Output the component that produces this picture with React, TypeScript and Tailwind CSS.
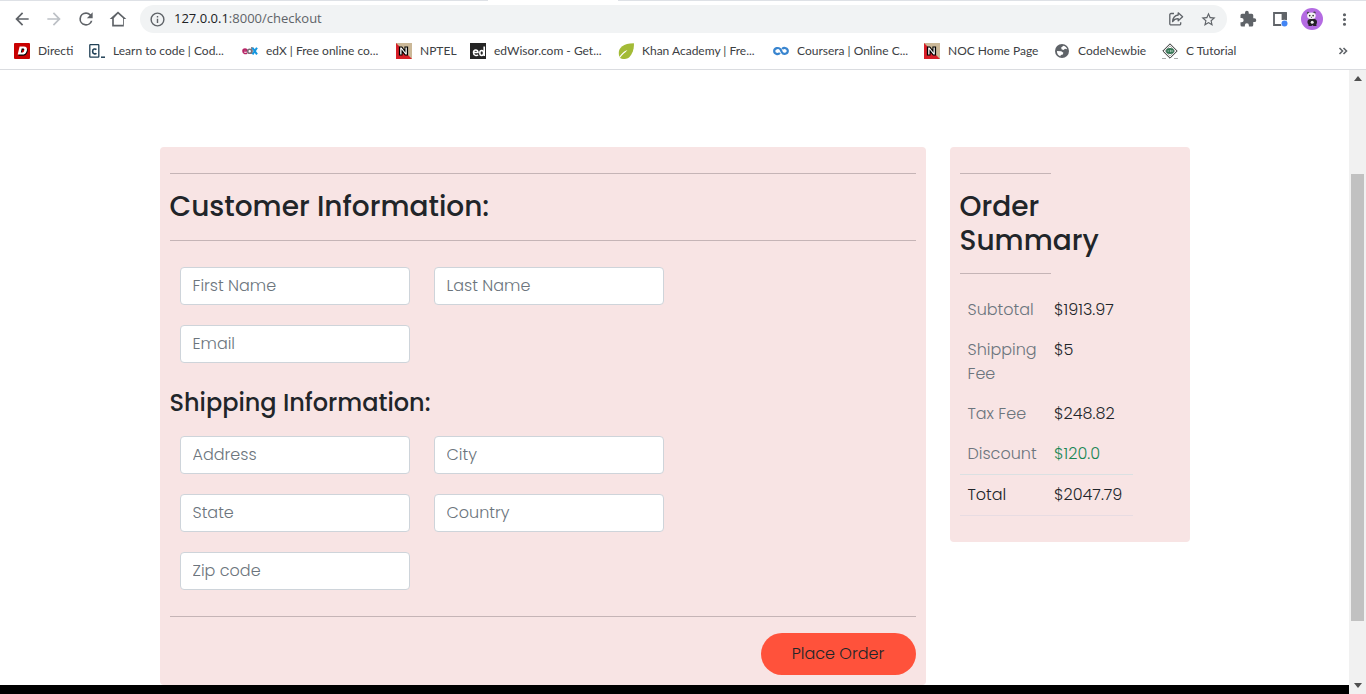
import React from "react";

function FieldInput({ label, type = "text" }: { label: string; type?: string }) {
  return (
    <input
      type={type}
      aria-label={label}
      placeholder={label}
      className="h-[38px] w-full rounded border border-[#ced4da] bg-white px-3 pb-px text-base font-light text-[#212529] placeholder:text-[#6c757d] placeholder:opacity-100"
    />
  );
}

function Rule({ className = "" }: { className?: string }) {
  return <hr className={`my-4 border-0 border-t border-[#c5b4b6] ${className}`} />;
}

const DirectiIcon = () => (
  <svg width="16" height="16" viewBox="0 0 16 16">
    <rect width="16" height="16" rx="1" fill="#c90000" />
    <path d="M5.6 4h4.2c2.5 0 3.7 1.5 3.1 4-.6 2.800-2.300 4.200-5 4.200H3.700zM7.700 6.200 6.800 10h1.100c1.300 0 2-.6 2.300-2 .3-1.200-.1-1.800-1.400-1.800z" fill="#000" transform="translate(.7 .6)" />
    <path d="M5.600 3.400h4.200c2.500 0 3.700 1.500 3.100 4-.6 2.800-2.300 4.200-5 4.200H3.700zM7.700 5.600 6.800 9.400h1.100c1.300 0 2-.6 2.300-2 .3-1.200-.1-1.800-1.400-1.800z" fill="#fff" />
  </svg>
);

const CodecademyIcon = () => (
  <svg width="16" height="16" viewBox="0 0 16 16" fill="none" stroke="#204056">
    <rect x=".8" y="1.700" width="9" height="12.500" rx=".6" strokeWidth="1.300" />
    <path d="M7.400 6.600C6.400 5.500 3.600 5.800 3.600 8.400s2.800 3 3.800 1.800" strokeWidth="1.600" />
    <path d="M12 14.200h4" strokeWidth="1.500" />
  </svg>
);

const EdxIcon = () => (
  <svg width="16" height="16" viewBox="0 0 16 16" fill="none">
    <path d="M1 8h4c0-2.500-4-2.500-4 0 0 3 3 3 4 1.700" stroke="#b72667" strokeWidth="1.600" />
    <circle cx="7.700" cy="8.300" r="2" stroke="#7b6f78" strokeWidth="1.600" />
    <path d="M9.900 4v7" stroke="#7b6f78" strokeWidth="1.500" />
    <path d="m10.500 4.700 4.500 6.700M15 4.700l-4.500 6.700" stroke="#1296e0" strokeWidth="2" />
  </svg>
);

const NptelIcon = () => (
  <svg width="16" height="16" viewBox="0 0 16 16">
    <rect width="16" height="16" fill="#cbb898" />
    <path d="M0 0v16h16z" fill="#d71e27" />
    <path d="M3.500 12V4h2.300l3.200 4.300V4h2.500v8H9.200L6 7.800V12z" stroke="#000" strokeWidth="1.200" fill="#000" />
    <path d="M4.200 11.500v-7h1.300l4 5.300V4.500h1.300v7H9.500l-4-5.200v5.200z" fill="#fff" />
  </svg>
);

const EdwisorIcon = () => (
  <svg width="16" height="16" viewBox="0 0 16 16" fill="none" stroke="#fff">
    <rect width="16" height="16" fill="#252525" stroke="none" />
    <path d="M4 9.500h4c0-3.500-4.500-3-4.500 0 0 3.500 3.500 3.500 4.500 2.200" strokeWidth="1.500" />
    <ellipse cx="11.700" cy="10" rx="1.900" ry="2.500" strokeWidth="1.500" />
    <path d="M14.200 3.500v9.600" strokeWidth="1.600" />
  </svg>
);

const KhanIcon = () => (
  <svg width="16" height="16" viewBox="0 0 16 16">
    <path d="M1.500 14C-1 7 2.500.4 15.900.2c.4 5-1.100 10.500-4.600 14-3 2.300-6.400 2.200-8.800 1.100z" fill="#a3bb36" />
    <path d="M.8 14.300C3 12.200 4.600 8.800 9.400 7 7.400 9.800 4.300 11.200 2 14.700z" fill="#fff" />
  </svg>
);

const CourseraIcon = () => (
  <svg width="16" height="16" viewBox="0 0 16 16" fill="none">
    <path d="M6.900 9.800C5.200 12.100 1.200 11 1.200 8S5.900 4 7.500 6.300l1.400 3c1.500 2.900 5.900 1.500 5.900-1.300s-3.700-4-5.600-2" stroke="#3985cf" strokeWidth="2.200" />
  </svg>
);

const GlobeIcon = () => (
  <svg width="16" height="16" viewBox="0 0 16 16">
    <circle cx="8" cy="8" r="7" fill="#5f6368" />
    <path d="M9.500 2.800 7.200 4.600l.3 1.700 2 .7 1.500-1.200 2.200.4c-.5-1.700-1.900-3-3.700-3.400zM2.900 7.900l4.300.4 2.200 1.500-.6 1.700-2 .6-.4 1.100C4.300 12.600 2.800 10.500 2.900 7.900z" fill="#fff" />
  </svg>
);

const TutorialIcon = () => (
  <svg width="16" height="16" viewBox="0 0 16 16" fill="none">
    <path d="m8 .8 7.200 7.200L8 15.200.8 8z" stroke="#333" strokeWidth="1" fill="#fff" />
    <path d="m8 2.800 5.200 5.200L8 13.200 2.800 8z" stroke="#777" strokeWidth=".7" />
    <ellipse cx="8" cy="8" rx="4" ry="3" fill="#317451" />
    <path d="M5.500 8h1.800m1.300-1.200v2.400m1.500-2.200v2" stroke="#c6ddd0" strokeWidth=".8" />
    <path d="M0 15.500h4m8 0h4" stroke="#aaa" />
  </svg>
);

const bookmarks: { name: string; Icon: React.FC }[] = [
  { name: "Directi", Icon: DirectiIcon },
  { name: "Learn to code | Cod...", Icon: CodecademyIcon },
  { name: "edX | Free online co...", Icon: EdxIcon },
  { name: "NPTEL", Icon: NptelIcon },
  { name: "edWisor.com - Get...", Icon: EdwisorIcon },
  { name: "Khan Academy | Fre...", Icon: KhanIcon },
  { name: "Coursera | Online C...", Icon: CourseraIcon },
  { name: "NOC Home Page", Icon: NptelIcon },
  { name: "CodeNewbie", Icon: GlobeIcon },
  { name: "C Tutorial", Icon: TutorialIcon },
];

const iconPath = {
  back: "M20 11H7.830l5.590-5.590L12 4l-8 8 8 8 1.410-1.410L7.830 13H20z",
  forward: "M4 11h12.170l-5.590-5.590L12 4l8 8-8 8-1.410-1.410L16.170 13H4z",
  reload: "M17.650 6.350A7.960 7.960 0 0 0 12 4a8 8 0 1 0 7.730 10h-2.080A6 6 0 1 1 12 6c1.660 0 3.140.690 4.220 1.780L13 11h7V4z",
  home: "M12 3 2 12h3v9h14v-9h3zm0 2.700 6 5.400V19H7v-8z",
  info: "M11 7h2v2h-2zm0 4h2v6h-2zm1-9a10 10 0 1 0 0 20 10 10 0 0 0 0-20zm0 18a8 8 0 1 1 0-16 8 8 0 0 1 0 16z",
  star: "m22 9.240-7.190-.620L12 2 9.190 8.630 2 9.240l5.460 4.730L5.820 21 12 17.270 18.180 21l-1.630-7.030zM12 15.400l-3.760 2.270 1-4.280-3.320-2.880 4.380-.380L12 6.100l1.710 4.040 4.380.380-3.320 2.880 1 4.280z",
  extension: "M20.500 11H19V7a2 2 0 0 0-2-2h-4V3.500a2.500 2.500 0 0 0-5 0V5H4a2 2 0 0 0-2 2v3.800h1.500a2.700 2.700 0 0 1 0 5.400H2V20a2 2 0 0 0 2 2h3.800v-1.500a2.700 2.700 0 0 1 5.400 0V22H17a2 2 0 0 0 2-2v-4h1.500a2.500 2.500 0 0 0 0-5z",
  more: "M12 8a2 2 0 1 0 0-4 2 2 0 0 0 0 4zm0 2a2 2 0 1 0 0 4 2 2 0 0 0 0-4zm0 6a2 2 0 1 0 0 4 2 2 0 0 0 0-4z",
};

function ToolIcon({ d, className = "size-5" }: { d: string; className?: string }) {
  return (
    <svg viewBox="0 0 24 24" fill="currentColor" className={className}>
      <path d={d} />
    </svg>
  );
}

function BrowserBar() {
  return (
    <header className="shrink-0 border-b border-[#dadce0] bg-white font-['Open_Sans','Noto_Sans',sans-serif] text-[#5f6368]">
      <div className="grid h-px grid-cols-[488px_130px_1fr]">
        <div className="bg-[#dee1e6]" />
        <div />
        <div className="bg-[#dee1e6]" />
      </div>
      <div className="flex h-9 items-center px-3">
        <nav aria-label="Browser" className="flex gap-3">
          <button aria-label="Back"><ToolIcon d={iconPath.back} /></button>
          <button aria-label="Forward" className="text-[#bdc1c6]"><ToolIcon d={iconPath.forward} /></button>
          <button aria-label="Reload"><ToolIcon d={iconPath.reload} /></button>
          <button aria-label="Home"><ToolIcon d={iconPath.home} /></button>
        </nav>
        <div className="ml-3 flex h-7 flex-1 items-center rounded-full bg-[#f1f3f4] pr-[10px] pl-2">
          <span className="flex w-[26px] pl-px"><ToolIcon d={iconPath.info} className="size-[17px]" /></span>
          <span className="flex-1 text-[13px]">
            <span className="text-[#202124]">127.0.0.1</span>:8000/checkout
          </span>
          <button aria-label="Share" className="mr-4">
            <svg width="16" height="16" viewBox="0 0 16 16" fill="none" stroke="currentColor" strokeWidth="1.300">
              <path d="M6 2.500H3a1.200 1.200 0 0 0-1.200 1.200v9A1.200 1.200 0 0 0 3 13.900h8.500a1.200 1.200 0 0 0 1.200-1.200v-1.500" />
              <path d="M10.200 1.800 14.600 5.800 10.200 9.800V7.600C7.600 7.500 5.900 8.600 4.600 10.600 4.900 7 6.700 4.500 10.200 4z" strokeLinejoin="round" />
            </svg>
          </button>
          <button aria-label="Bookmark"><ToolIcon d={iconPath.star} className="size-[17px]" /></button>
        </div>
        <div className="ml-3 flex items-center">
          <button aria-label="Extensions"><ToolIcon d={iconPath.extension} className="size-[18px]" /></button>
          <button aria-label="Side panel" className="ml-4">
            <svg width="15" height="15" viewBox="0 0 15 15">
              <path d="M1 1h12v12H1z" fill="none" stroke="#5f6368" strokeWidth="1.800" />
              <path d="M8.600 1H14v7H8.600z" fill="#5f6368" />
              <circle cx="11.500" cy="11.500" r="3.700" fill="#fff" />
              <circle cx="11.500" cy="11.500" r="3" fill="#4285f4" />
            </svg>
          </button>
          <button aria-label="Profile" className="ml-[13px]">
            <svg width="22" height="22" viewBox="0 0 22 22">
              <circle cx="11" cy="11" r="11" fill="#b46be2" />
              <ellipse cx="11.200" cy="14" rx="4.800" ry="3.300" fill="#242026" />
              <path d="M7.500 13.500h7.500l.5 4.500h-3l-1-1.200-1 1.200H7.500z" fill="#242026" />
              <ellipse cx="11.200" cy="14.200" rx="1.500" ry="1.500" fill="#f4f4f4" />
              <circle cx="7" cy="5" r="1.200" fill="#504858" />
              <circle cx="13.500" cy="4.600" r="1.200" fill="#504858" />
              <ellipse cx="10.400" cy="7.700" rx="4.300" ry="3.300" fill="#f4f4f4" />
              <ellipse cx="8.700" cy="7.600" rx=".8" ry=".9" fill="#242026" />
              <ellipse cx="12.100" cy="7.600" rx=".8" ry=".9" fill="#242026" />
              <circle cx="10.400" cy="9.300" r=".5" fill="#242026" />
            </svg>
          </button>
          <button aria-label="More" className="ml-3"><ToolIcon d={iconPath.more} className="size-[19px]" /></button>
        </div>
      </div>
      <div className="flex h-8 items-center pr-[18px] pb-1 pl-[14px]">
        <nav aria-label="Bookmarks" className="grid flex-1 grid-cols-[75px_153px_154px_74px_148px_155px_151px_130px_108px_1fr] font-[Lato,'Open_Sans',sans-serif]">
          {bookmarks.map(({ name, Icon }) => (
            <a key={name} href="#" className="flex items-center gap-2 text-xs whitespace-nowrap text-[#3c4043]">
              <span className="flex w-4 shrink-0"><Icon /></span>
              {name}
            </a>
          ))}
        </nav>
        <button aria-label="More bookmarks">
          <svg width="10" height="8" viewBox="0 0 10 8" fill="none" stroke="#5f6368" strokeWidth="1.600">
            <path d="m1.500 1 3 3-3 3M5.500 1l3 3-3 3" />
          </svg>
        </button>
      </div>
    </header>
  );
}

function CustomerForm() {
  return (
    <form className="rounded bg-[#f8e4e4] p-[10px]" onSubmit={(e) => e.preventDefault()}>
      <Rule />
      <h1 className="text-[28px] leading-[1.2] font-medium">Customer Information:</h1>
      <Rule />
      <div className="grid grid-cols-[230px_230px] gap-x-6 gap-y-5 p-[10px] pb-0">
        <FieldInput label="First Name" />
        <FieldInput label="Last Name" />
        <FieldInput label="Email" type="email" />
      </div>
      <h2 className="mt-[25px] mb-2 text-2xl leading-[30px] font-medium">Shipping Information:</h2>
      <div className="grid grid-cols-[230px_230px] gap-x-6 gap-y-5 p-[10px]">
        <FieldInput label="Address" />
        <FieldInput label="City" />
        <FieldInput label="State" />
        <FieldInput label="Country" />
        <FieldInput label="Zip code" />
      </div>
      <Rule />
      <div className="flex justify-end">
        <button className="h-[42px] w-[155px] rounded-full bg-[#ff523b] text-base font-light text-[#212529]">
          Place Order
        </button>
      </div>
    </form>
  );
}

const charges = [
  { label: "Subtotal", amount: "$1913.97", tone: "" },
  { label: "Shipping Fee", amount: "$5", tone: "" },
  { label: "Tax Fee", amount: "$248.82", tone: "" },
  { label: "Discount", amount: "$120.0", tone: "text-[#198754]" },
];

function OrderSummary() {
  return (
    <aside className="rounded bg-[#f8e4e4] p-[10px]">
      <Rule className="w-[91px]" />
      <h2 className="text-[28px] leading-[1.2] font-medium">Order<br />Summary</h2>
      <Rule className="w-[91px]" />
      <table className="mb-4 w-[173px] table-fixed border-collapse text-left text-base leading-6 font-light">
        <tbody>
          {charges.map(({ label, amount, tone }) => (
            <tr key={label} className="align-top">
              <th scope="row" className="py-2 pl-2 font-light text-[#6c757d]">{label}</th>
              <td className={`p-2 ${tone}`}>{amount}</td>
            </tr>
          ))}
          <tr className="border-y border-t-[#dbe0e2] border-b-[#e8dce2] align-top">
            <th scope="row" className="py-2 pl-2 font-light">Total</th>
            <td className="py-2 pl-2">{"$2047.79"}</td>
          </tr>
        </tbody>
      </table>
    </aside>
  );
}

function ScrollTrack() {
  return (
    <div aria-hidden="true" className="flex w-[17px] shrink-0 flex-col items-center bg-[#f1f1f1] py-[6px]">
      <svg width="8" height="5" viewBox="0 0 8 5"><path d="M0 5h8L4 0z" fill="#505050" /></svg>
      <div className="flex w-full flex-1 flex-col items-center pt-[93px] pb-3">
        <div className="w-[13px] grow-[9] bg-[#c1c1c1]" />
        <div className="grow" />
      </div>
      <svg width="8" height="5" viewBox="0 0 8 5"><path d="M0 0h8L4 5z" fill="#505050" /></svg>
    </div>
  );
}

export default function App() {
  return (
    <div className="flex h-screen flex-col overflow-hidden bg-white">
      <BrowserBar />
      <div className="flex min-h-0 flex-1">
        <div className="flex min-w-0 flex-1 flex-col overflow-hidden font-[Poppins,Inter,sans-serif] text-[#212529]">
          <main className="mx-auto grid w-full max-w-[1030px] grid-cols-[minmax(0,1fr)_240px] items-start gap-6 pt-[77px]">
            <CustomerForm />
            <OrderSummary />
          </main>
          <footer className="flex-1 bg-black" />
        </div>
        <ScrollTrack />
      </div>
    </div>
  );
}
